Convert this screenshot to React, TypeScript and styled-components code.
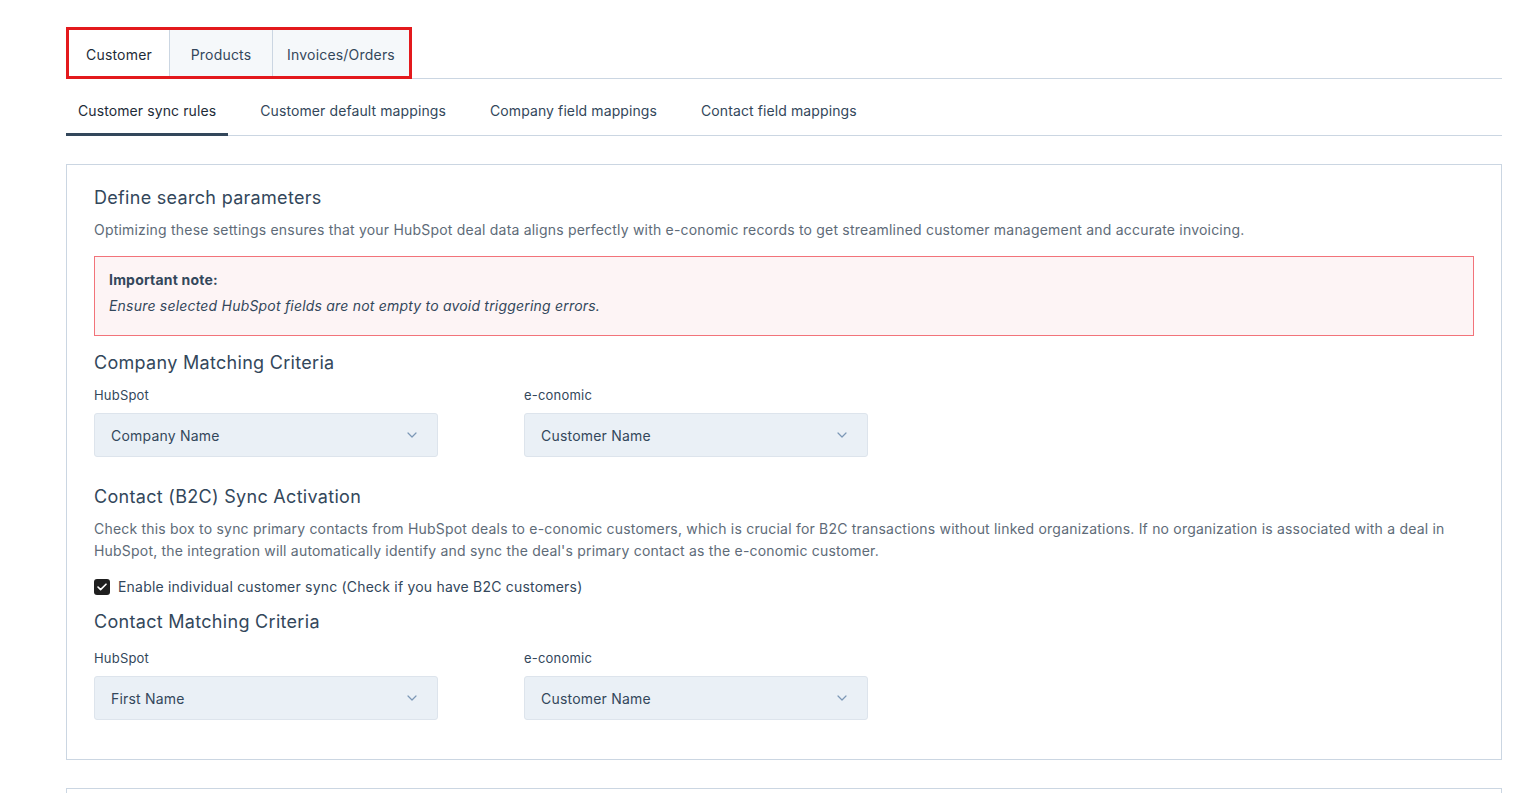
import React, { useState } from 'react'
import styled, { createGlobalStyle } from 'styled-components'

const GlobalStyle = createGlobalStyle`
  body {
    margin: 0;
    background: #fff;
    font-family: 'Inter', 'Liberation Sans', sans-serif;
    letter-spacing: 0.2px;
    color: #33475b;
  }
`

const Page = styled.div`
  padding: 27px 23px 0 66px;
  height: 793px;
  box-sizing: border-box;
  overflow: hidden;
`

const TopTabRow = styled.div`
  display: flex;
  align-items: flex-end;
`

const TopTabsFrame = styled.div`
  display: flex;
  border: 3px solid #e3191c;
`

const TopTab = styled.button<{ $active?: boolean; $width: number }>`
  width: ${(p) => p.$width}px;
  height: 46px;
  padding: 2px 0 0;
  border: none;
  border-left: ${(p) => (p.$active ? 'none' : '1px solid #cbd6e2')};
  background: ${(p) => (p.$active ? '#fff' : '#f5f8fa')};
  color: ${(p) => (p.$active ? '#1d2b38' : '#33475b')};
  font-family: inherit;
  font-size: 14px;
  letter-spacing: inherit;
  cursor: pointer;
`

const TopTabLine = styled.div`
  flex: 1;
  border-bottom: 1px solid #cbd6e2;
`

const SubTabs = styled.div`
  display: flex;
  gap: 20px;
  margin-top: 8px;
  border-bottom: 1px solid #cbd6e2;
`

const SubTab = styled.button<{ $active?: boolean }>`
  height: 49px;
  padding: 0 12px;
  border: none;
  border-bottom: 3px solid ${(p) => (p.$active ? '#33475b' : 'transparent')};
  margin-bottom: -1px;
  background: transparent;
  color: ${(p) => (p.$active ? '#1d2b38' : '#33475b')};
  font-family: inherit;
  font-size: 14px;
  letter-spacing: 0.1px;
  cursor: pointer;
`

const Card = styled.section`
  margin-top: 28px;
  border: 1px solid #cbd6e2;
  padding: 21px 27px 39px 27px;
`

const NextCard = styled.section`
  margin-top: 28px;
  border: 1px solid #cbd6e2;
  border-bottom: none;
  height: 40px;
`

const SectionTitle = styled.h2<{ $top?: number }>`
  margin: ${(p) => p.$top ?? 0}px 0 0;
  font-size: 18px;
  font-weight: 400;
  line-height: 24px;
  letter-spacing: 0.3px;
  color: #33475b;
`

const Description = styled.p`
  margin: 9px 0 0;
  font-size: 14px;
  line-height: 22px;
  color: #5e6b78;
`

const Alert = styled.div`
  margin-top: 15px;
  border: 1px solid #f2737a;
  background: #fdf4f5;
  padding: 13px 14px 19px;
`

const AlertTitle = styled.div`
  font-size: 14px;
  font-weight: 700;
  line-height: 20px;
  color: #33475b;
`

const AlertText = styled.div`
  margin-top: 6px;
  font-size: 14px;
  font-style: italic;
  line-height: 20px;
  color: #33475b;
`

const FieldRow = styled.div<{ $top: number }>`
  display: flex;
  gap: 86px;
  margin-top: ${(p) => p.$top}px;
`

const Field = styled.div`
  width: 344px;
`

const Label = styled.div`
  font-size: 13px;
  line-height: 18px;
  color: #33475b;
`

const Select = styled.div`
  margin-top: 9px;
  height: 44px;
  box-sizing: border-box;
  display: flex;
  align-items: center;
  justify-content: space-between;
  padding: 0 20px 0 16px;
  background: #eaf0f6;
  border: 1px solid #dde4ec;
  border-radius: 3px;
  font-size: 14px;
  color: #33475b;
  cursor: pointer;
`

const CheckRow = styled.label`
  display: flex;
  align-items: center;
  gap: 8px;
  margin-top: 16px;
  font-size: 14px;
  color: #33475b;
  cursor: pointer;
`

const CheckBox = styled.span`
  width: 16px;
  height: 16px;
  border-radius: 3px;
  background: #1f1f1f;
  display: flex;
  align-items: center;
  justify-content: center;
`

function Chevron() {
  return (
    <svg width="10" height="6" viewBox="0 0 10 6" fill="none">
      <path d="M1 1l4 4 4-4" stroke="#7c98b6" strokeWidth="1.2" strokeLinecap="round" strokeLinejoin="round" />
    </svg>
  )
}

function Dropdown({ label, value }: { label: string; value: string }) {
  return (
    <Field>
      <Label>{label}</Label>
      <Select>
        <span>{value}</span>
        <Chevron />
      </Select>
    </Field>
  )
}

const topTabs = [
  { name: 'Customer', width: 100 },
  { name: 'Products', width: 103 },
  { name: 'Invoices/Orders', width: 137 },
]

const subTabs = ['Customer sync rules', 'Customer default mappings', 'Company field mappings', 'Contact field mappings']

export default function App() {
  const [topTab, setTopTab] = useState('Customer')
  const [subTab, setSubTab] = useState('Customer sync rules')
  const [b2c, setB2c] = useState(true)

  return (
    <>
      <GlobalStyle />
      <Page>
        <TopTabRow>
          <TopTabsFrame>
            {topTabs.map((t) => (
              <TopTab key={t.name} $width={t.width} $active={t.name === topTab} onClick={() => setTopTab(t.name)}>
                {t.name}
              </TopTab>
            ))}
          </TopTabsFrame>
          <TopTabLine />
        </TopTabRow>

        <SubTabs>
          {subTabs.map((t) => (
            <SubTab key={t} $active={t === subTab} onClick={() => setSubTab(t)}>
              {t}
            </SubTab>
          ))}
        </SubTabs>

        <Card>
          <SectionTitle>Define search parameters</SectionTitle>
          <Description>
            Optimizing these settings ensures that your HubSpot deal data aligns perfectly with e-conomic records to get streamlined customer management and accurate invoicing.
          </Description>
          <Alert>
            <AlertTitle>Important note:</AlertTitle>
            <AlertText>Ensure selected HubSpot fields are not empty to avoid triggering errors.</AlertText>
          </Alert>

          <SectionTitle $top={15}>Company Matching Criteria</SectionTitle>
          <FieldRow $top={11}>
            <Dropdown label="HubSpot" value="Company Name" />
            <Dropdown label="e-conomic" value="Customer Name" />
          </FieldRow>

          <SectionTitle $top={28}>Contact (B2C) Sync Activation</SectionTitle>
          <Description>
            Check this box to sync primary contacts from HubSpot deals to e-conomic customers, which is crucial for B2C transactions without linked organizations. If no organization is associated with a deal in HubSpot, the integration will automatically identify and sync the deal's primary contact as the e-conomic customer.
          </Description>
          <CheckRow onClick={() => setB2c(!b2c)}>
            <CheckBox>
              {b2c && (
                <svg width="10" height="8" viewBox="0 0 10 8" fill="none">
                  <path d="M1 4l2.6 2.6L9 1.2" stroke="#fff" strokeWidth="1.6" strokeLinecap="round" strokeLinejoin="round" />
                </svg>
              )}
            </CheckBox>
            Enable individual customer sync (Check if you have B2C customers)
          </CheckRow>

          <SectionTitle $top={15}>Contact Matching Criteria</SectionTitle>
          <FieldRow $top={15}>
            <Dropdown label="HubSpot" value="First Name" />
            <Dropdown label="e-conomic" value="Customer Name" />
          </FieldRow>
        </Card>

        <NextCard />
      </Page>
    </>
  )
}
